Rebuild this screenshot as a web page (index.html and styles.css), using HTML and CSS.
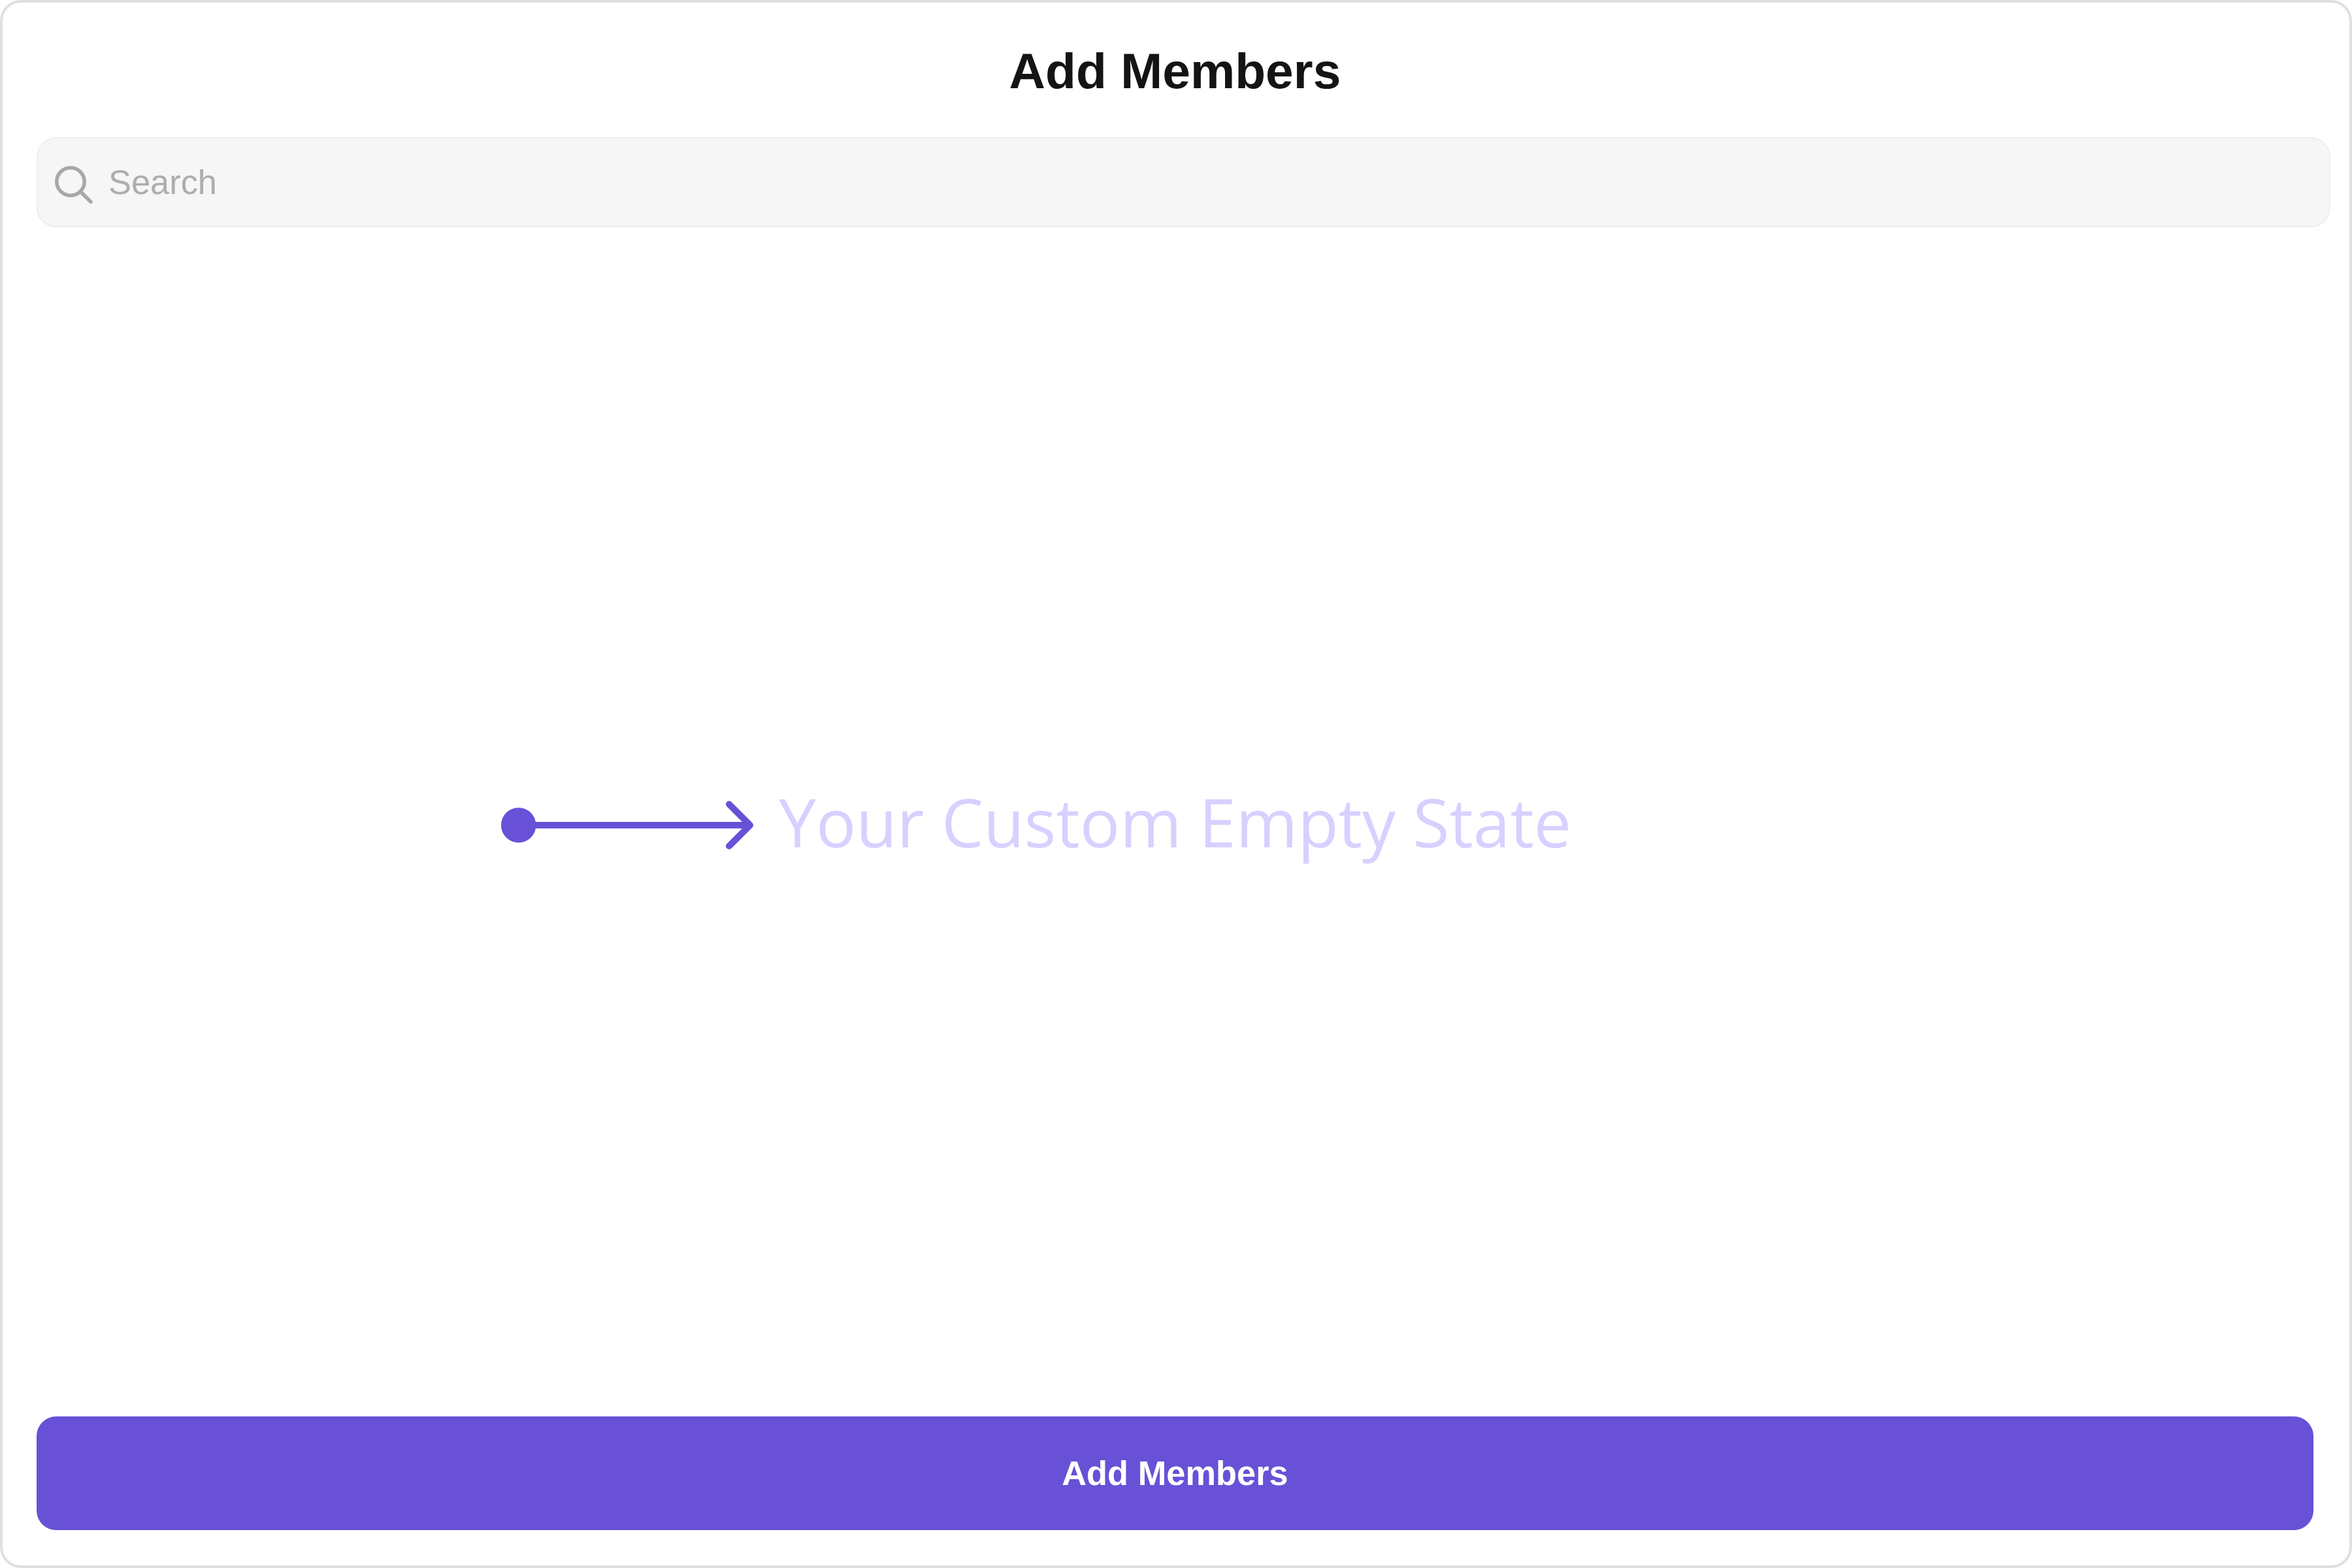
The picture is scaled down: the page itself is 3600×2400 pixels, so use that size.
FILE: index.html
```html
<!DOCTYPE html>
<html lang="en">
<head>
<meta charset="utf-8">
<title>Add Members</title>
<link rel="stylesheet" href="styles.css">
</head>
<body>
<div class="panel">
  <h1 class="title">Add Members</h1>
  <div class="search">
    <svg class="search-icon" viewBox="0 0 60 60" width="60" height="60" aria-hidden="true">
      <circle cx="24" cy="26" r="21.2" fill="none" stroke="#a8a8a8" stroke-width="5.6"/>
      <path d="M39.2 41.2 L55 57" fill="none" stroke="#a8a8a8" stroke-width="5.6" stroke-linecap="round"/>
    </svg>
    <span class="search-text">Search</span>
  </div>
  <div class="empty">
    <svg class="arrow" viewBox="0 0 390 80" width="390" height="80" aria-hidden="true">
      <circle cx="26.7" cy="40" r="26.7" fill="#6851d6"/>
      <path d="M27 40 H381 M349 8 L381 40 L349 72" fill="none" stroke="#6851d6" stroke-width="10" stroke-linecap="round" stroke-linejoin="round"/>
    </svg>
    <span class="empty-text">Your Custom Empty State</span>
  </div>
  <button class="submit" type="button">Add Members</button>
</div>
</body>
</html>
```
FILE: styles.css
```css
* { box-sizing: border-box; }
html, body { margin: 0; height: 100%; background: #fff; }
body { font-family: "Liberation Sans", Arial, sans-serif; }
.panel {
  height: 2400px;
  display: flex;
  flex-direction: column;
  padding: 0 55px 54px 52px;
  border: 4px solid #e0e0e0;
  border-radius: 32px;
  background: #fff;
}
.title {
  margin: 0;
  height: 206px;
  padding-top: 58px;
  font-size: 76.8px;
  line-height: 92px;
  font-weight: 700;
  text-align: center;
  color: #141414;
}
.search {
  height: 138px;
  margin-right: -26px;
  display: flex;
  align-items: center;
  gap: 22px;
  padding-left: 26px;
  background: #f6f6f6;
  border: 2px solid #eeeeee;
  border-radius: 30px;
}
.search-icon { flex: none; position: relative; top: 3px; }
.search-text { font-size: 52.4px; color: #adadad; }
.empty {
  flex: 1;
  display: grid;
  grid-template-columns: 1fr auto 1fr;
  align-items: center;
  column-gap: 35px;
}
.arrow { justify-self: end; grid-column: 1; margin-top: 10px; }
.empty-text {
  grid-column: 2;
  font-family: "Open Sans", "Noto Sans", sans-serif;
  font-size: 102px;
  font-weight: 400;
  line-height: 120px;
  color: #d8d0ff;
  white-space: nowrap;
}
.submit {
  flex: none;
  height: 174px;
  padding: 0;
  border: 0;
  border-radius: 30px;
  background: #6851d6;
  color: #fff;
  font-family: inherit;
  font-size: 52.4px;
  font-weight: 700;
}
```
